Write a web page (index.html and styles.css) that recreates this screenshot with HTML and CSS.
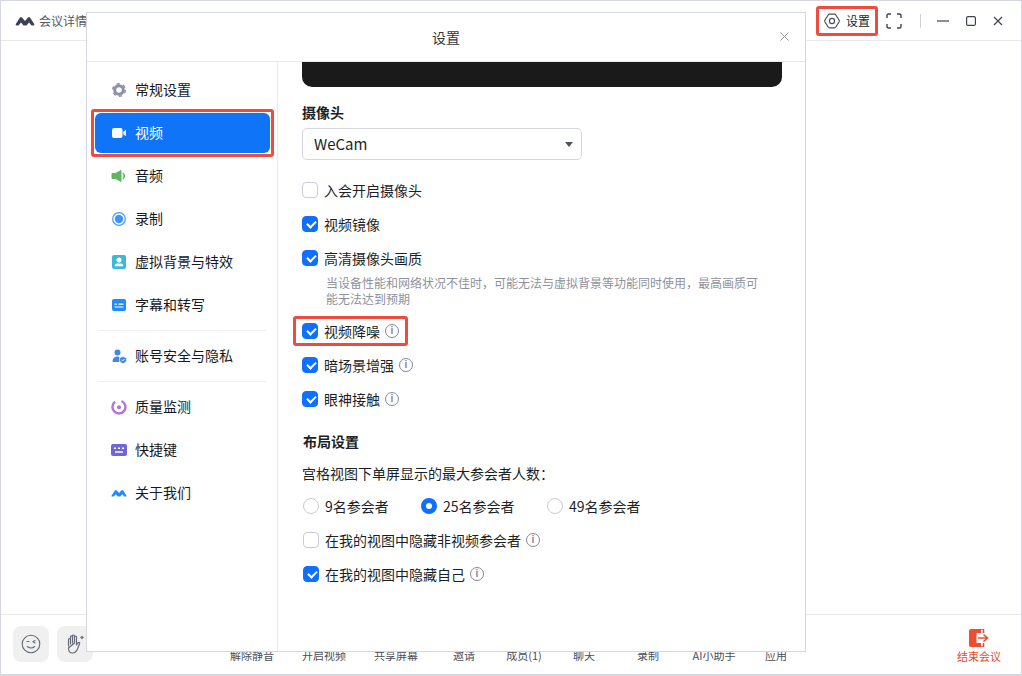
FILE: index.html
```html
<!DOCTYPE html>
<html lang="zh-CN">
<head>
<meta charset="utf-8">
<title>会议详情</title>
<link rel="stylesheet" href="styles.css">
</head>
<body>
<div class="app">
  <header class="titlebar">
    <div class="brand">
      <svg class="logo" width="20" height="10" viewBox="0 0 20 10"><path d="M.8 8 4.800 1.800Q6 .4 7.200 1.800L10 5 12.800 1.800Q14 .4 15.200 1.800L19.200 8Q19.800 9.500 18.300 9.500H16.500L14 6.500 11.500 9.500H8.500L6 6.500 3.500 9.500H1.700Q.2 9.500.8 8Z" fill="#3d4350"/></svg>
      <span>会议详情</span>
    </div>
    <div class="title-actions">
      <div class="settings-btn">
        <svg width="18" height="18" viewBox="0 0 18 18" fill="none" stroke="#4b4f5c" stroke-width="1.200"><path d="M6.500 2.200H11.500Q12.300 2.200 12.800 3L16 8Q16.600 9 16 10L12.800 15Q12.300 15.800 11.500 15.800H6.500Q5.700 15.800 5.200 15L2 10Q1.400 9 2 8L5.200 3Q5.700 2.200 6.500 2.200Z"/><circle cx="9" cy="9" r="2.600"/></svg>
        <span>设置</span>
      </div>
      <svg class="fs" width="16" height="16" viewBox="0 0 16 16" fill="none" stroke="#3f4350" stroke-width="1.400"><path d="M1 5V2.500Q1 1 2.500 1H5M11 1h2.500Q15 1 15 2.500V5M15 11v2.500Q15 15 13.500 15H11M5 15H2.500Q1 15 1 13.500V11"/></svg>
      <i class="vline"></i>
      <svg class="win-min" width="12" height="12" viewBox="0 0 12 12" stroke="#3f4350" stroke-width="1.200"><path d="M0 6h12"/></svg>
      <svg class="win-max" width="10" height="10" viewBox="0 0 10 10" fill="none" stroke="#3f4350" stroke-width="1.200"><rect x=".6" y=".6" width="8.800" height="8.800" rx="1.500"/></svg>
      <svg class="win-close" width="10" height="10" viewBox="0 0 10 10" stroke="#3f4350" stroke-width="1.200"><path d="M1 1l8 8M9 1 1 9"/></svg>
    </div>
  </header>
  <main class="stage"></main>
  <footer class="toolbar">
    <div class="quick">
      <div class="quick-btn">
        <svg width="20" height="20" viewBox="0 0 20 20" fill="none" stroke="#666b78" stroke-width="1.100"><circle cx="10" cy="10" r="8.800"/><path d="M6 7.500h2M14 6.500l-2 1.300 2 1.200M6.300 12.500Q10 15.500 13.700 12.500" stroke-linecap="round"/></svg>
      </div>
      <div class="quick-btn">
        <svg width="22" height="22" viewBox="0 0 22 22" fill="none" stroke="#666b78" stroke-width="1.200" stroke-linecap="round" stroke-linejoin="round"><path d="M4.500 13V6.500a1 1 0 0 1 2 0V11M6.500 10V3.800a1 1 0 0 1 2 0V10M8.500 10V3a1 1 0 0 1 2 0v7M10.500 10V4a1 1 0 0 1 2 0v8l1.500-2.200c1-1 2.200 0 1.500 1.200L13 17q-1.500 3-4.500 3-4 0-4-5Z"/><path d="M18 3.500v2M17 4.500h2" stroke-width="1.400"/></svg>
      </div>
    </div>
    <nav class="tools">
      <span class="tool w72">解除静音</span>
      <span class="tool w72">开启视频</span>
      <span class="tool w72">共享屏幕</span>
      <span class="tool w64">邀请</span>
      <span class="tool w56">成员(1)</span>
      <span class="tool w64">聊天</span>
      <span class="tool w64">录制</span>
      <span class="tool w68">AI小助手</span>
      <span class="tool w56">应用</span>
    </nav>
    <div class="end">
      <svg width="20" height="18" viewBox="0 0 20 18"><path d="M2 0h10v4H7.500v10H12v4H2a2 2 0 0 1-2-2V2a2 2 0 0 1 2-2Z" fill="#ec4e2f"/><path d="M12 0h1.500a1 1 0 0 1 1 1v3M12 18h1.500a1 1 0 0 0 1-1v-3M9 9h9M14.500 5.500 18.500 9l-4 3.500" fill="none" stroke="#ec4e2f" stroke-width="1.600"/></svg>
      <span>结束会议</span>
    </div>
  </footer>

  <section class="dialog">
    <div class="dialog-head">
      <span>设置</span>
      <svg class="dialog-close" width="9" height="9" viewBox="0 0 9 9" stroke="#8f929b" stroke-width="1"><path d="M.5.5l8 8M8.500.5l-8 8"/></svg>
    </div>
    <div class="dialog-body">
      <aside class="side">
        <div class="nav-item">
          <svg width="16" height="16" viewBox="0 0 16 16" fill="none"><circle cx="8" cy="8" r="4.300" stroke="#8a90a6" stroke-width="3"/><circle cx="8" cy="8" r="6.300" stroke="#8a90a6" stroke-width="1.500" stroke-dasharray="3.200 3.400"/></svg>
          <span>常规设置</span>
        </div>
        <div class="nav-item active">
          <svg width="16" height="16" viewBox="0 0 16 16" fill="#fff"><rect x="1" y="3" width="10.500" height="10" rx="2"/><path d="M12.300 6.800 15 4.800v6.400l-2.700-2Z"/></svg>
          <span>视频</span>
        </div>
        <div class="nav-item">
          <svg width="16" height="16" viewBox="0 0 16 16" fill="#5cb85c"><path d="M1 5.500h3.500L10 2.500v11l-5.500-3H1Z" stroke="#5cb85c" stroke-linejoin="round"/><path d="M12 5Q14.600 8 12 11" fill="none" stroke="#5cb85c" stroke-width="1.500"/></svg>
          <span>音频</span>
        </div>
        <div class="nav-item">
          <svg width="16" height="16" viewBox="0 0 16 16"><circle cx="8" cy="8" r="6.300" fill="none" stroke="#4f9df7" stroke-width="1.300"/><circle cx="8" cy="8" r="4.200" fill="#3f95f5"/></svg>
          <span>录制</span>
        </div>
        <div class="nav-item">
          <svg width="16" height="16" viewBox="0 0 16 16"><rect x="1" y="1" width="14" height="14" rx="2" fill="#3db9d6"/><circle cx="8" cy="6" r="2.500" fill="#fff"/><path d="M3.800 12.300q0-2.800 2.500-2.800h3.400q2.500 0 2.500 2.800Z" fill="#fff"/></svg>
          <span>虚拟背景与特效</span>
        </div>
        <div class="nav-item">
          <svg width="16" height="16" viewBox="0 0 16 16"><rect x="1" y="2" width="14" height="12" rx="2" fill="#1f8bff"/><path d="M3.500 7.200h2.500M7.500 7.200h5M3.500 10h9" stroke="#fff" stroke-width="1.200"/></svg>
          <span>字幕和转写</span>
        </div>
        <hr class="sep">
        <div class="nav-item">
          <svg width="16" height="16" viewBox="0 0 16 16"><circle cx="6.500" cy="4.500" r="3" fill="#3e86ea"/><path d="M1.500 14q0-5.500 5-5.500l2 .5-.5 5Z" fill="#3e86ea"/><path d="M8.500 9.800 12 8.500l3.500 1.300v2.500q0 2.200-3.500 3.300-3.500-1.100-3.500-3.300Z" fill="#3e86ea" stroke="#fff" stroke-width=".6"/><path d="M10.500 11.700l1.200 1.200 2-2" fill="none" stroke="#fff" stroke-width="1"/></svg>
          <span>账号安全与隐私</span>
        </div>
        <hr class="sep">
        <div class="nav-item">
          <svg width="16" height="16" viewBox="0 0 16 16" fill="none"><path d="M10.500 2A6.500 6.500 0 1 1 4 2.800" stroke="#b573d6" stroke-width="2.400"/><circle cx="8" cy="8.300" r="2" fill="#b573d6"/></svg>
          <span>质量监测</span>
        </div>
        <div class="nav-item">
          <svg width="16" height="16" viewBox="0 0 16 16"><rect x="0" y="2" width="16" height="12" rx="2" fill="#6f64d8"/><path d="M3 6.200h2M7 6.200h2M11 6.200h2M4 10h8" stroke="#fff" stroke-width="1.500"/></svg>
          <span>快捷键</span>
        </div>
        <div class="nav-item">
          <svg width="16" height="8" viewBox="0 0 20 10"><path d="M.8 8 4.800 1.800Q6 .4 7.200 1.800L10 5 12.800 1.800Q14 .4 15.200 1.800L19.200 8Q19.800 9.500 18.300 9.500H16.500L14 6.500 11.500 9.500H8.500L6 6.500 3.500 9.500H1.700Q.2 9.500.8 8Z" fill="#1f8bff"/></svg>
          <span>关于我们</span>
        </div>
      </aside>
      <div class="panel">
        <div class="preview"></div>
        <h3 class="label cam-label">摄像头</h3>
        <div class="select">
          <span>WeCam</span>
          <i class="caret"></i>
        </div>
        <label class="row r1"><i class="box"></i><span>入会开启摄像头</span></label>
        <label class="row r2"><i class="box on"></i><span>视频镜像</span></label>
        <label class="row r3"><i class="box on"></i><span>高清摄像头画质</span></label>
        <p class="desc">当设备性能和网络状况不佳时，可能无法与虚拟背景等功能同时使用，最高画质可能无法达到预期</p>
        <label class="row r4 marked"><i class="box on"></i><span>视频降噪</span><i class="info">i</i><b class="mark"></b></label>
        <label class="row r4"><i class="box on"></i><span>暗场景增强</span><i class="info">i</i></label>
        <label class="row r4"><i class="box on"></i><span>眼神接触</span><i class="info">i</i></label>
        <h3 class="label layout-label">布局设置</h3>
        <p class="line">宫格视图下单屏显示的最大参会者人数：</p>
        <div class="radios">
          <label class="radio r-a"><i class="dot"></i><span>9名参会者</span></label>
          <label class="radio r-b"><i class="dot on"></i><span>25名参会者</span></label>
          <label class="radio"><i class="dot"></i><span>49名参会者</span></label>
        </div>
        <label class="row r4 shift"><i class="box"></i><span>在我的视图中隐藏非视频参会者</span><i class="info">i</i></label>
        <label class="row r4 shift"><i class="box on"></i><span>在我的视图中隐藏自己</span><i class="info">i</i></label>
      </div>
    </div>
  </section>
</div>
</body>
</html>
```

FILE: styles.css
```css
* { box-sizing: border-box; }
html, body { margin: 0; height: 100%; }
body {
  width: 1022px;
  height: 676px;
  overflow: hidden;
  background: #fff;
  color: #1d1f26;
  font-family: "Noto Sans CJK SC", "Noto Sans", sans-serif;
  font-size: 13px;
}
.app {
  position: relative;
  height: 676px;
  display: flex;
  flex-direction: column;
  border: 1px solid #d5d7de;
  border-bottom-width: 2px;
}
.titlebar {
  height: 40px;
  flex: none;
  display: flex;
  justify-content: space-between;
  align-items: center;
  border-bottom: 1px solid #e8e9ef;
  padding: 0 18px 0 14px;
}
.brand { display: flex; align-items: center; gap: 4px; color: #555963; font-size: 12px; }
.title-actions { display: flex; align-items: center; }
.settings-btn {
  display: flex;
  align-items: center;
  gap: 5px;
  width: 62px;
  height: 30px;
  padding-left: 4px;
  border: 3px solid #ef4c41;
  border-radius: 3px;
  font-size: 12px;
  color: #1d1f26;
}
.fs { margin-left: 8px; }
.vline { width: 1px; height: 14px; background: #cfd1d8; margin-left: 18px; }
.win-min { margin-left: 16px; }
.win-max { margin-left: 17px; }
.win-close { margin-left: 17px; }
.stage { flex: 1; }
.toolbar {
  height: 60px;
  flex: none;
  border-top: 1px solid #e8e9ef;
  position: relative;
  display: flex;
  align-items: flex-start;
  padding: 11px 12px 0;
}
.quick { display: flex; gap: 8px; }
.quick-btn {
  width: 36px;
  height: 36px;
  border-radius: 8px;
  background: #f0f0f1;
  display: flex;
  align-items: center;
  justify-content: center;
}
.tools {
  display: flex;
  margin-left: 123px;
  padding-top: 20px;
  font-size: 11px;
  line-height: 18px;
  color: #4a4e59;
}
.tool { text-align: center; white-space: nowrap; }
.w72 { width: 72px; }
.w68 { width: 68px; }
.w64 { width: 64px; }
.w56 { width: 56px; }
.end {
  margin-left: auto;
  margin-right: 8px;
  margin-top: 3px;
  display: flex;
  flex-direction: column;
  align-items: center;
  color: #e8492f;
  font-size: 11px;
  line-height: 18px;
}
.dialog {
  position: absolute;
  left: 85px;
  top: 11px;
  width: 720px;
  height: 640px;
  background: #fff;
  border: 1px solid #d5d7de;
  display: flex;
  flex-direction: column;
}
.dialog-head {
  height: 49px;
  flex: none;
  border-bottom: 1px solid #e8e9ef;
  display: flex;
  align-items: center;
  justify-content: center;
  position: relative;
  font-size: 14px;
  color: #333640;
}
.dialog-close { position: absolute; right: 16px; top: 19px; }
.dialog-body { flex: 1; display: flex; min-height: 0; }
.side {
  width: 191px;
  flex: none;
  border-right: 1px solid #e8e9ef;
  padding: 5px 7px 0 8px;
}
.nav-item {
  position: relative;
  height: 40px;
  margin-top: 3px;
  padding-left: 16px;
  display: flex;
  align-items: center;
  gap: 8px;
  font-size: 14px;
  border-radius: 6px;
  color: #16181f;
}
.nav-item span { margin-bottom: 2px; }
.nav-item.active {
  background: #0f74f8;
  color: #fff;
}
.nav-item.active::after {
  content: "";
  position: absolute;
  inset: -4px;
  border: 3px solid #ef4c41;
  border-radius: 3px;
}
.sep {
  border: 0;
  height: 1px;
  background: #f0f1f4;
  margin: 5px 4px 5px 3px;
}
.panel { flex: 1; padding: 0 23px 0 24px; min-width: 0; }
.preview {
  height: 25px;
  background: #1a1a1a;
  border-radius: 0 0 10px 10px;
}
.label {
  margin: 0;
  font-size: 14px;
  line-height: 20px;
  font-weight: 700;
}
.cam-label { margin-top: 15px; }
.layout-label { margin-top: 22px; margin-left: 1px; }
.select {
  margin-top: 6px;
  width: 280px;
  height: 32px;
  border: 1px solid #d5d7de;
  border-radius: 5px;
  display: flex;
  align-items: center;
  justify-content: space-between;
  padding: 0 8px 0 11px;
  font-size: 15px;
  color: #1d1f26;
}
.select span { margin-bottom: 2px; }
.caret {
  width: 0;
  height: 0;
  border-left: 4px solid transparent;
  border-right: 4px solid transparent;
  border-top: 5px solid #50535f;
}
.row {
  position: relative;
  display: flex;
  align-items: center;
  height: 20px;
  gap: 6px;
  font-size: 14px;
  line-height: 20px;
}
.r1 { margin-top: 20px; }
.r2 { margin-top: 14px; }
.r3 { margin-top: 14px; }
.r4 { margin-top: 14px; }
.shift { margin-left: 1px; }
.box {
  position: relative;
  width: 16px;
  height: 16px;
  flex: none;
  border: 1px solid #c9cbd6;
  border-radius: 4px;
  background: #fff;
}
.box.on { background: #0f6fff; border-color: #0f6fff; }
.box.on::after {
  content: "";
  position: absolute;
  left: 3.500px;
  top: 2px;
  width: 7px;
  height: 4px;
  border-left: 2px solid #fff;
  border-bottom: 2px solid #fff;
  transform: rotate(-45deg) translate(-1px, 1px);
}
.info {
  width: 14px;
  height: 14px;
  flex: none;
  margin-left: -1px;
  border: 1.300px solid #858997;
  border-radius: 50%;
  color: #858997;
  font-family: "Liberation Sans", sans-serif;
  font-style: normal;
  font-size: 10px;
  font-weight: 700;
  line-height: 11px;
  text-align: center;
}
.desc {
  margin: 7px 0 0 24px;
  width: 436px;
  font-size: 12px;
  line-height: 16px;
  color: #8e919c;
}
.mark {
  position: absolute;
  left: -9px;
  top: -5px;
  width: 115px;
  height: 30px;
  border: 3px solid #ef4c41;
  border-radius: 3px;
  pointer-events: none;
}
.line { margin: 12px 0 0; font-size: 14px; line-height: 20px; }
.radios { display: flex; margin-top: 13px; margin-left: 1px; font-size: 14px; line-height: 20px; }
.radio { display: flex; align-items: center; gap: 6px; }
.r-a { width: 118px; }
.r-b { width: 126px; }
.dot {
  width: 16px;
  height: 16px;
  flex: none;
  border: 1px solid #c9cbd6;
  border-radius: 50%;
  background: #fff;
}
.dot.on { border: 5px solid #0f6fff; }
```
